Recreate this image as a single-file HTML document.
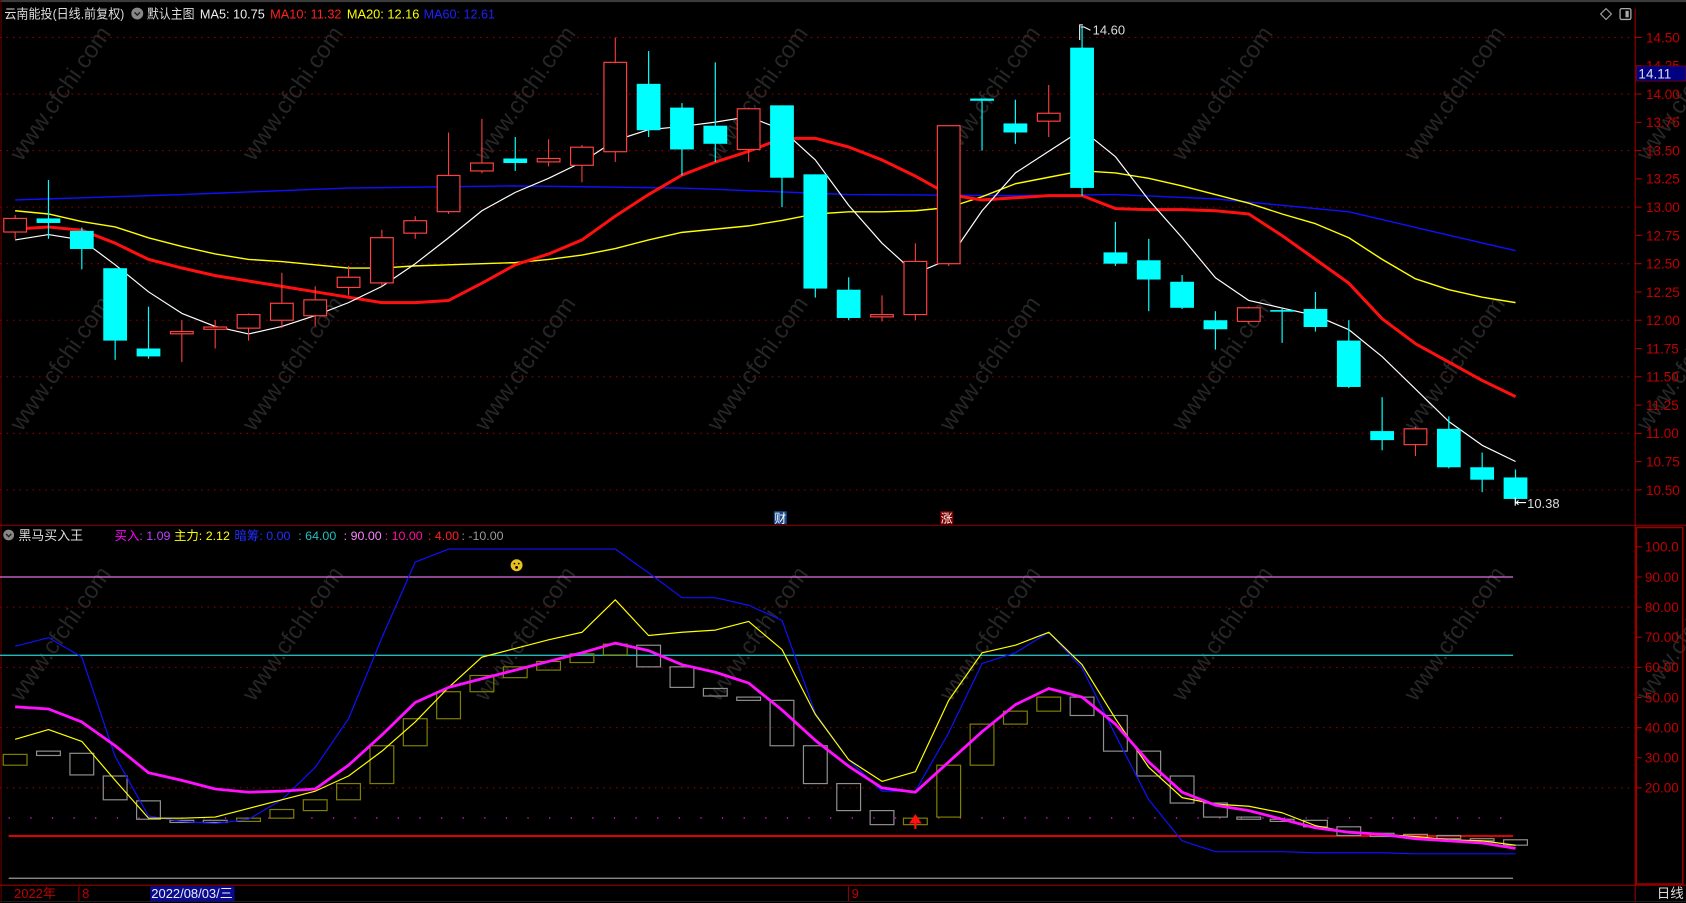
<!DOCTYPE html>
<html><head><meta charset="utf-8">
<style>
html,body{margin:0;padding:0;background:#000;width:1686px;height:903px;overflow:hidden}
svg{display:block}
text{font-family:"Liberation Sans","Noto Sans CJK SC",sans-serif}
</style></head>
<body>
<svg id="s" width="1686" height="903" viewBox="0 0 1560 835.5" preserveAspectRatio="none" xmlns="http://www.w3.org/2000/svg">
<rect x="0" y="0" width="1560" height="835.5" fill="#000"/>
<g id="wm" fill="#262626" font-size="22"></g>
<line x1="0" y1="1" x2="1560" y2="1" stroke="#3a3a3a" stroke-width="2"/>
<line x1="1" y1="0" x2="1" y2="835" stroke="#600" stroke-width="1"/>
<g id="grid"></g>
<g id="ma"></g>
<g id="cdl"></g>
<g id="ind"></g>
<line x1="0" y1="486" x2="1560" y2="486" stroke="#900" stroke-width="1"/>
<line x1="1513" y1="8" x2="1513" y2="835" stroke="#900" stroke-width="1"/>
<rect x="1514" y="488" width="43" height="330" fill="none" stroke="#900" stroke-width="1.5"/>
<line x1="0" y1="819" x2="1560" y2="819" stroke="#900" stroke-width="1"/>
<line x1="0" y1="834" x2="1560" y2="834" stroke="#222" stroke-width="1"/>
<text x="4" y="17" font-size="12" fill="#ddd" textLength="111" lengthAdjust="spacingAndGlyphs">云南能投(日线.前复权)</text>
<circle cx="127" cy="12.5" r="5.5" fill="#888"/><path d="M124.5 11.5 L127 14 L129.5 11.5" stroke="#222" stroke-width="1.3" fill="none"/>
<text x="136" y="17" font-size="12" fill="#ddd" textLength="44" lengthAdjust="spacingAndGlyphs">默认主图</text>
<text x="185" y="17" font-size="12" fill="#eee" textLength="60" lengthAdjust="spacingAndGlyphs">MA5: 10.75</text>
<text x="250" y="17" font-size="12" fill="#ff2020" textLength="66" lengthAdjust="spacingAndGlyphs">MA10: 11.32</text>
<text x="321" y="17" font-size="12" fill="#ffff00" textLength="67" lengthAdjust="spacingAndGlyphs">MA20: 12.16</text>
<text x="392" y="17" font-size="12" fill="#2020ff" textLength="66" lengthAdjust="spacingAndGlyphs">MA60: 12.61</text>
<path d="M1486 8 L1491 13 L1486 18 L1481 13 Z" fill="none" stroke="#aaa" stroke-width="1"/>
<rect x="1499" y="8" width="10" height="10" rx="1.5" fill="none" stroke="#aaa" stroke-width="1.2"/><rect x="1504" y="10" width="3" height="6" fill="#aaa"/>
<rect x="1514" y="61" width="46" height="14" fill="#000080" stroke="#900" stroke-width="0.6"/>
<text x="1516" y="72.5" font-size="12.5" fill="#dde">14.11</text>
<path d="M999 37 L999 23 L1002 23 M1000 25 L1003 25 L1009 28" stroke="#fff" stroke-width="1" fill="none"/>
<text x="1011" y="32" font-size="12" fill="#ddd">14.60</text>
<path d="M1402 460 L1402 468 M1403 465 L1412 465 M1405 463 L1403 465 L1405 467" stroke="#fff" stroke-width="1" fill="none"/>
<text x="1413" y="470" font-size="12" fill="#ddd">10.38</text>
<rect x="716" y="473" width="12" height="12" fill="#1a4a8a"/><text x="716.5" y="483.5" font-size="11" fill="#fff">财</text>
<rect x="870" y="473" width="12" height="12" fill="#800000"/><text x="870.5" y="483.5" font-size="11" fill="#fff">涨</text>
<circle cx="8" cy="495" r="5" fill="#888"/><path d="M5.5 494 L8 496.5 L10.5 494" stroke="#222" stroke-width="1.3" fill="none"/>
<text x="17" y="499.5" font-size="12" fill="#ddd">黑马买入王</text>
<text x="106" y="499.5" font-size="11.5" fill="#ff00ff">买入<tspan fill="#c040ff">: 1.09</tspan></text>
<text x="161" y="499.5" font-size="11.5" fill="#ffff00">主力: 2.12</text>
<text x="217" y="499.5" font-size="11.5" fill="#2030ff">暗筹: 0.00</text>
<text x="276" y="499.5" font-size="11.5" fill="#20c0c0">: 64.00</text>
<text x="318" y="499.5" font-size="11.5" fill="#ff80ff">: 90.00</text>
<text x="356" y="499.5" font-size="11.5" fill="#ff10a0">: 10.00</text>
<text x="396" y="499.5" font-size="11.5" fill="#ff2020">: 4.00</text>
<text x="427" y="499.5" font-size="11.5" fill="#999">: -10.00</text>
<circle cx="478" cy="523" r="5.5" fill="#e8c020"/><circle cx="476" cy="521.5" r="0.8" fill="#000"/><circle cx="480" cy="521.5" r="0.8" fill="#000"/><circle cx="478" cy="525" r="1.3" fill="#000"/>
<text x="13" y="831" font-size="12" fill="#c00000">2022年</text>
<line x1="73" y1="820" x2="73" y2="834" stroke="#900"/><text x="76" y="831" font-size="12" fill="#c00000">8</text>
<rect x="139" y="820" width="78" height="14" fill="#0a0a90"/><text x="140" y="831" font-size="12" fill="#eee">2022/08/03/三</text>
<line x1="785" y1="820" x2="785" y2="834" stroke="#900"/><text x="788" y="831" font-size="12" fill="#c00000">9</text>
<text x="1533" y="831" font-size="12.5" fill="#ddd">日线</text>
</svg>
<script>
var NS="http://www.w3.org/2000/svg";
function el(p,t,a){var e=document.createElementNS(NS,t);for(var k in a)e.setAttribute(k,a[k]);p.appendChild(e);return e;}
function g(id){return document.getElementById(id);}
var X=function(i){return 14+30.85*i;};
var Y=function(p){return 87+(14-p)*104.65;};
var V=function(v){return 506+(100-v)*2.787;};
var wm=g('wm');
for(var r=0;r<3;r++)for(var c=0;c<8;c++){
 var x=20+c*215, y=150+r*250;
 var t=el(wm,'text',{x:x,y:y,transform:'rotate(-55 '+x+' '+y+')'});t.textContent='www.cfchi.com';
}
var gr=g('grid');
[14.5,14,13.5,13,12.5,12,11.5,11,10.5].forEach(function(p){el(gr,'line',{x1:0,y1:Y(p),x2:1513,y2:Y(p),stroke:'#8a0000','stroke-width':1,'stroke-dasharray':'1.5 4.5'});});
for(var p=14.5;p>=10.49;p-=0.25){var y=Y(p);el(gr,'line',{x1:1513,y1:y,x2:1519,y2:y,stroke:'#a00'});var t=el(gr,'text',{x:1523,y:y+4.5,'font-size':12.5,fill:'#c00000'});t.textContent=p.toFixed(2);}
[80,60,40,20].forEach(function(v){el(gr,'line',{x1:0,y1:V(v),x2:1513,y2:V(v),stroke:'#8a0000','stroke-width':1,'stroke-dasharray':'1.5 4.5'});});
[100,90,80,70,60,50,40,30,20].forEach(function(v){var y=V(v);el(gr,'line',{x1:1513,y1:y,x2:1519,y2:y,stroke:'#a00'});var t=el(gr,'text',{x:1522,y:y+4.5,'font-size':12.5,fill:'#c00000'});t.textContent=(v==100?'100.0':v.toFixed(2));});
el(gr,'line',{x1:0,y1:V(90),x2:1400,y2:V(90),stroke:'#e070e0','stroke-width':1.2});
el(gr,'line',{x1:0,y1:V(64),x2:1400,y2:V(64),stroke:'#20b8b8','stroke-width':1.2});
el(gr,'line',{x1:8,y1:V(4),x2:1400,y2:V(4),stroke:'#ff0000','stroke-width':1.6});
el(gr,'line',{x1:8,y1:V(-10),x2:1400,y2:V(-10),stroke:'#999','stroke-width':1.2});
for(var x=8;x<1405;x+=20)el(gr,'rect',{x:x,y:V(10)-0.6,width:1.2,height:1.2,fill:'#e020e0'});
var C=[[12.78,12.90,12.93,12.72],[12.90,12.86,13.24,12.72],[12.79,12.63,12.82,12.45],[12.46,11.82,12.46,11.65],[11.75,11.68,12.12,11.66],
[11.88,11.90,12.0,11.63],[11.92,11.94,12.0,11.75],[11.93,12.05,12.06,11.82],[12.0,12.15,12.42,11.93],[12.04,12.18,12.3,11.95],
[12.29,12.38,12.48,12.22],[12.33,12.73,12.80,12.30],[12.77,12.88,12.92,12.72],[12.96,13.28,13.66,12.94],[13.32,13.39,13.78,13.30],
[13.43,13.39,13.62,13.32],[13.40,13.43,13.60,13.36],[13.37,13.53,13.55,13.22],[13.49,14.28,14.50,13.40],[14.09,13.68,14.38,13.62],
[13.88,13.51,13.92,13.28],[13.72,13.56,14.28,13.40],[13.51,13.87,13.88,13.40],[13.90,13.26,13.90,13.0],[13.29,12.28,13.29,12.2],
[12.27,12.02,12.38,12.0],[12.03,12.05,12.22,11.99],[12.05,12.52,12.68,12.0],[12.50,13.72,13.72,12.48],[13.96,13.94,13.96,13.5],
[13.74,13.66,13.95,13.56],[13.76,13.83,14.08,13.62],[14.41,13.17,14.60,13.10],[12.60,12.50,12.87,12.48],[12.53,12.36,12.72,12.08],
[12.34,12.11,12.40,12.10],[12.0,11.92,12.08,11.74],[11.99,12.11,12.12,11.97],[12.09,12.08,12.1,11.8],[12.1,11.94,12.25,11.9],
[11.82,11.41,12.0,11.40],[11.02,10.94,11.32,10.85],[10.9,11.04,11.06,10.8],[11.04,10.70,11.15,10.69],[10.70,10.59,10.83,10.48],[10.61,10.42,10.68,10.38]];
var cd=g('cdl');
C.forEach(function(k,i){var x=X(i),o=Y(k[0]),c=Y(k[1]),h=Y(k[2]),l=Y(k[3]);var up=k[1]>=k[0];
 var top=Math.min(o,c),bot=Math.max(o,c);if(bot-top<1.5)bot=top+1.5;
 if(up){el(cd,'line',{x1:x,y1:h,x2:x,y2:top,stroke:'#ff4040'});el(cd,'line',{x1:x,y1:bot,x2:x,y2:l,stroke:'#ff4040'});
  el(cd,'rect',{x:x-10.5,y:top,width:21,height:bot-top,fill:'#000',stroke:'#ff4040','stroke-width':1.1});}
 else{el(cd,'line',{x1:x,y1:h,x2:x,y2:l,stroke:'#00ffff','stroke-width':1.1});el(cd,'rect',{x:x-11,y:top,width:22,height:bot-top,fill:'#00ffff'});}
});
function pl(par,arr,col,w){var d=arr.map(function(y,i){return X(i).toFixed(1)+','+y;}).join(' ');el(par,'polyline',{points:d,fill:'none',stroke:col,'stroke-width':w,'stroke-linejoin':'round'});}
var ma=g('ma');
var blue=[];for(var i=0;i<46;i++){var pts=[[0,185],[5,180],[10,174],[15,172],[20,174],[25,180],[30,181],[33,180],[36,184],[40,196],[45,232]];for(var j=0;j<pts.length-1;j++){if(i>=pts[j][0]&&i<=pts[j+1][0]){var t=(i-pts[j][0])/(pts[j+1][0]-pts[j][0]);blue.push(pts[j][1]+t*(pts[j+1][1]-pts[j][1]));break;}}}
pl(ma,blue,'#1010ff',1.3);
pl(ma,[195,198,205,210,220,228,235,240,242,245,248,248,246,245,244,243,240,236,230,222,215,212,209,204,198,196,196,195,192,182,170,164,158,160,165,172,180,188,198,207,220,240,258,268,275,280],'#ffff00',1.3);
pl(ma,[212,210,213,225,240,248,255,260,265,270,275,280,280,278,262,245,235,222,200,180,162,150,140,128,128,136,148,163,180,185,183,181,181,193,194,194,195,198,218,240,262,295,318,335,352,367],'#ff1010',2.8);
pl(ma,[222,217,222,245,270,290,302,309,302,292,280,265,244,220,195,178,165,150,130,120,117,113,108,120,148,190,225,253,240,195,160,140,120,145,185,220,257,278,285,292,305,330,360,390,412,427],'#ffffff',1.1);
var ind=g('ind');
var B=[[698,708,1],[695,699,0],[697,717,0],[718,740,0],[741,758,0],[759,761,0],[759,761,0],[757,760,1],[749,757,1],[740,750,1],[725,740,1],[690,725,1],[665,690,1],[640,665,1],[625,640,1],[617,627,1],[612,620,1],[605,613,1],[596,606,1],[597,617,0],[617,636,0],[637,644,0],[645,648,0],[648,690,0],[690,725,0],[725,750,0],[750,763,0],[757,763,1],[708,756,1],[670,708,1],[658,670,1],[645,658,1],[645,662,0],[662,695,0],[695,718,0],[718,743,0],[743,756,0],[756,758,0],[758,760,0],[759,765,0],[765,773,0],[771,774,0],[772,775,0],[773,776,0],[776,778,0],[777,782,0]];
B.forEach(function(b,i){el(ind,'rect',{x:X(i)-11,y:b[0],width:22,height:Math.max(b[1]-b[0],1.5),fill:'none',stroke:b[2]?'#808000':'#909090','stroke-width':1.1});});
pl(ind,[598,590,608,700,755,760,762,758,740,710,665,590,520,508,508,508,508,508,508,530,553,553,560,574,660,703,732,732,678,614,604,585,618,680,740,778,788,788,788,789,789,789,790,790,790,790],'#1010ff',1.1);
pl(ind,[684,675,686,722,757,757,756,748,740,732,718,695,668,636,608,600,592,585,555,588,585,583,575,601,661,703,723,714,648,604,597,585,615,665,710,738,744,746,752,764,770,772,774,777,778,782],'#ffff00',1.1);
pl(ind,[654,656,668,690,715,722,730,733,732,730,708,680,650,636,628,620,612,604,595,602,615,622,632,657,685,709,729,733,705,677,652,637,645,670,705,733,745,750,758,766,770,772,776,778,780,785],'#ff10ff',2.6);
var ax=X(27);el(ind,'path',{d:'M'+ax+' 767 L'+ax+' 758 M'+(ax-4)+' 761 L'+ax+' 755 L'+(ax+4)+' 761 Z',stroke:'#ff1010','stroke-width':2,fill:'#ff1010'});
</script>
</body></html>
